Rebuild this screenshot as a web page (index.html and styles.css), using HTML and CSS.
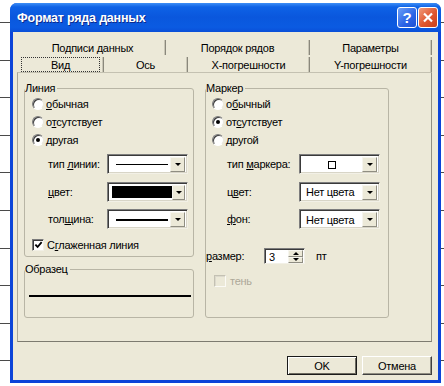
FILE: index.html
```html
<!DOCTYPE html>
<html lang="ru">
    <head>
    <meta charset="utf-8">
    <title>Формат ряда данных</title>
    <link rel="stylesheet" href="styles.css">
    </head>
    <body>
        <div class="window">
            <div class="titlebar">
                <span class="title">Формат ряда данных</span>
                <div class="title-buttons">
                    <span class="tbtn help">?</span>
                    <span class="tbtn close">
                        <svg width="20" height="21" viewBox="0 0 20 21"><path d="M6 6.5 L14 14.5 M14 6.5 L6 14.5" stroke="#fff" stroke-width="2.2" fill="none"/></svg>
                    </span>
                </div>
            </div>

            <div class="client">
                <!-- two rows of tabs, the front one holds the selected tab -->
                <div class="tabs">
                    <div class="tab-row back">
                        <div class="tab">Подписи данных</div>
                        <div class="tab">Порядок рядов</div>
                        <div class="tab">Параметры</div>
                    </div>
                    <div class="tab-row front">
                        <div class="tab active"><span class="focus">Вид</span></div>
                        <div class="tab">Ось</div>
                        <div class="tab">X-погрешности</div>
                        <div class="tab">Y-погрешности</div>
                    </div>
                </div>

                <div class="panel">
                    <div class="panel-body">
                        <div class="column">
                            <fieldset class="group line-group">
                                <legend>Линия</legend>
                                <div class="opt"><span class="radio"></span><span><u>о</u>бычная</span></div>
                                <div class="opt"><span class="radio"></span><span>о<u>т</u>сутствует</span></div>
                                <div class="opt"><span class="radio checked"></span><span>другая</span></div>

                                <div class="field first">
                                    <span class="field-label">тип <u>л</u>инии:</span>
                                    <div class="combo">
                                        <span class="combo-value"><span class="stroke thin"></span></span>
                                        <span class="combo-arrow"></span>
                                    </div>
                                </div>
                                <div class="field">
                                    <span class="field-label"><u>ц</u>вет:</span>
                                    <div class="combo">
                                        <span class="combo-value"><span class="swatch"></span></span>
                                        <span class="combo-arrow"></span>
                                    </div>
                                </div>
                                <div class="field">
                                    <span class="field-label">тол<u>щ</u>ина:</span>
                                    <div class="combo">
                                        <span class="combo-value"><span class="stroke thick"></span></span>
                                        <span class="combo-arrow"></span>
                                    </div>
                                </div>

                                <div class="check-row smooth">
                                    <span class="checkbox">
                                        <svg width="10" height="10" viewBox="0 0 10 10"><path d="M1.5 4.5 L4 7.2 L8.5 1.8" stroke="#000" stroke-width="2" fill="none"/></svg>
                                    </span>
                                    <span>С<u>г</u>лаженная линия</span>
                                </div>
                            </fieldset>

                            <fieldset class="group sample">
                                <legend>Образец</legend>
                                <div class="sample-line"></div>
                            </fieldset>
                        </div>

                        <fieldset class="group marker-group">
                            <legend>Маркер</legend>
                            <div class="opt"><span class="radio"></span><span>о<u>б</u>ычный</span></div>
                            <div class="opt"><span class="radio checked"></span><span>от<u>с</u>утствует</span></div>
                            <div class="opt"><span class="radio"></span><span>другой</span></div>

                            <div class="field first">
                                <span class="field-label">тип <u>м</u>аркера:</span>
                                <div class="combo">
                                    <span class="combo-value center"><span class="marker-box"></span></span>
                                    <span class="combo-arrow"></span>
                                </div>
                            </div>
                            <div class="field">
                                <span class="field-label">ц<u>в</u>ет:</span>
                                <div class="combo">
                                    <span class="combo-value">Нет цвета</span>
                                    <span class="combo-arrow"></span>
                                </div>
                            </div>
                            <div class="field">
                                <span class="field-label"><u>ф</u>он:</span>
                                <div class="combo">
                                    <span class="combo-value">Нет цвета</span>
                                    <span class="combo-arrow"></span>
                                </div>
                            </div>

                            <div class="size-row">
                                <span class="size-label"><u>р</u>азмер:</span>
                                <div class="spin">
                                    <span class="spin-value">3</span>
                                    <span class="spin-btns"><span class="up"></span><span class="down"></span></span>
                                </div>
                                <span class="unit">пт</span>
                            </div>

                            <div class="check-row shadow">
                                <span class="checkbox disabled"></span>
                                <span>тень</span>
                            </div>
                        </fieldset>
                    </div>
                </div>

                <div class="buttons">
                    <button type="button" class="btn default">OK</button>
                    <button type="button" class="btn">Отмена</button>
                </div>
            </div>
        </div>
    </body>
</html>
```

FILE: styles.css
```css
* {
    box-sizing: border-box;
}

html, body {
    margin: 0;
}

body {
    width: 444px;
    height: 386px;
    overflow: hidden;
    font-family: "Liberation Sans", Arial, sans-serif;
    font-size: 11px;
    letter-spacing: -0.25px;
    color: #000;
    /* spreadsheet grid behind the dialog */
    background: #fff repeating-linear-gradient(#fff 0 22px, #4a4a4a 22px 23px, #fff 23px 37.6px);
}

u {
    text-decoration: underline;
    text-underline-offset: 1px;
}

.window {
    margin: 3px 0 0 10px;
    width: 431px;
    height: 380px;
    display: flex;
    flex-direction: column;
    background: #0c44d8;
    border-radius: 7px 7px 0 0;
}

.titlebar {
    height: 29px;
    flex: none;
    display: flex;
    align-items: center;
    justify-content: space-between;
    padding: 0 3px 0 7px;
    border-radius: 7px 7px 0 0;
    background: linear-gradient(#3d8ef6 0, #0e62e6 4px, #0a57dd 14px, #0b5be2 24px, #0a4fd8 29px);
}

.title {
    color: #fff;
    font-weight: bold;
    font-size: 12.5px;
    letter-spacing: -0.2px;
    text-shadow: 1px 1px #0b2a8c;
}

.title-buttons {
    display: flex;
    gap: 1px;
}

.tbtn {
    width: 20px;
    height: 21px;
    border: 1px solid #fff;
    border-radius: 3px;
    display: flex;
    align-items: center;
    justify-content: center;
}

.help {
    background: linear-gradient(135deg, #6b9ff7, #2a63e6 60%, #1f52d4);
    color: #fff;
    font-weight: bold;
    font-size: 15px;
}

.close {
    background: linear-gradient(135deg, #f09a7a, #e0562f 55%, #c9401c);
}

.close svg {
    margin: -1px;
}

.client {
    flex: 1;
    margin: 0 3px 3px;
    padding: 6px 6px 0 4px;
    background: #ece9d8;
}

.tabs {
    padding-left: 3px;
}

.tab-row {
    display: grid;
    height: 17px;
    padding-top: 2px;
}

.back {
    grid-template-columns: 146px 144px 122px;
}

.front {
    grid-template-columns: 84px 84px 122px 122px;
}

.tab {
    display: flex;
    align-items: center;
    justify-content: center;
    border-right: 1px solid #8a887c;
    box-shadow: inset -1px 0 0 #c9c6b6;
    padding-top: 1px;
}

.tab.active {
    padding: 0 3px 0 1px;
}

.focus {
    flex: 1;
    align-self: stretch;
    display: flex;
    align-items: center;
    justify-content: center;
    border: 1px dotted #333;
}

.panel {
    height: 270px;
    padding: 9px 0 0 6px;
    border: 1px solid;
    border-color: #c4c1b1 #8f8d82 #7d7b70 #a8a699;
}

.panel-body {
    display: flex;
    gap: 11px;
}

.column {
    display: flex;
    flex-direction: column;
    width: 170px;
}

.group {
    margin: 0;
    padding: 0;
    min-width: 0;
    border: 1px solid #b8b5a5;
    border-radius: 3px;
}

.group legend {
    padding: 0 2px 0 0;
    line-height: 13px;
}

.line-group {
    padding-bottom: 3px;
}

.sample {
    margin-top: 6px;
    height: 55px;
}

.sample-line {
    margin: 19px 2px 0 4px;
    height: 2px;
    background: #000;
}

.marker-group {
    width: 184px;
}

.opt {
    height: 18px;
    display: flex;
    align-items: center;
    gap: 2px;
    padding-left: 7px;
}

.marker-group .opt {
    padding-left: 6px;
}

.radio {
    width: 12px;
    height: 12px;
    border-radius: 50%;
    background: #fff;
    border: 1px solid;
    border-color: #7a7a7a #e8e6dc #ffffff #7a7a7a;
    box-shadow: inset 1px 1px 0 #3c3c3c;
    display: flex;
    align-items: center;
    justify-content: center;
}

.radio.checked::after {
    content: "";
    width: 4px;
    height: 4px;
    border-radius: 50%;
    background: #000;
}

.field {
    display: flex;
    align-items: center;
    height: 20px;
    margin-top: 7.5px;
    padding-left: 23px;
}

.field.first {
    margin-top: 5px;
}

.field-label {
    width: 59px;
}

.marker-group .field {
    padding-left: 21px;
}

.marker-group .field-label {
    width: 72px;
}

.combo {
    width: 81px;
    height: 20px;
    display: flex;
    background: #fff;
    border: 1px solid;
    border-color: #7d7d7d #f2f0e6 #f2f0e6 #7d7d7d;
    box-shadow: inset 1px 1px 0 #3a3a3a, inset -1px -1px 0 #d8d5c7;
    padding: 2px 2px 1px 2px;
}

.combo-value {
    flex: 1;
    display: flex;
    align-items: center;
    padding-left: 4px;
}

.combo-value.center {
    justify-content: center;
    padding-left: 0;
}

.stroke {
    width: 52px;
    margin-left: 2px;
    background: #000;
}

.stroke.thin {
    height: 1px;
}

.stroke.thick {
    height: 2px;
}

.swatch {
    width: 60px;
    height: 12px;
    margin-left: -2px;
    background: #000;
}

.marker-box {
    width: 8px;
    height: 8px;
    border: 1px solid #000;
}

.combo-arrow {
    width: 15px;
    display: flex;
    align-items: center;
    justify-content: center;
    background: #ece9d8;
    border: 1px solid;
    border-color: #f6f5ee #8f8d82 #8f8d82 #f6f5ee;
}

.combo-arrow::after,
.spin-btns span::after {
    content: "";
    border-left: 3px solid transparent;
    border-right: 3px solid transparent;
    border-top: 3px solid #000;
}

.check-row {
    display: flex;
    align-items: center;
}

.smooth {
    height: 16px;
    margin-top: 7.5px;
    padding-left: 7px;
    gap: 3px;
}

.checkbox {
    width: 12px;
    height: 12px;
    background: #fff;
    border: 1px solid;
    border-color: #7a7a7a #f2f0e6 #f2f0e6 #7a7a7a;
    box-shadow: inset 1px 1px 0 #3c3c3c;
    display: flex;
    align-items: center;
    justify-content: center;
}

.checkbox svg {
    margin: 1px 0 0 1px;
}

.checkbox.disabled {
    background: #ece9d8;
    border-color: #c4c1b3 #fbfaf5 #fbfaf5 #c4c1b3;
    box-shadow: inset 1px 1px 0 #dcd9cc;
}

.size-row {
    display: flex;
    align-items: center;
    height: 16px;
    margin-top: 19px;
}

.size-label {
    width: 58px;
}

.spin {
    width: 41px;
    height: 16px;
    display: flex;
    background: #fff;
    border: 1px solid;
    border-color: #7d7d7d #f2f0e6 #f2f0e6 #7d7d7d;
    box-shadow: inset 1px 1px 0 #3a3a3a;
    padding: 1px 1px 0 1px;
}

.spin-value {
    flex: 1;
    padding: 1px 0 0 3px;
}

.spin-btns {
    width: 15px;
    display: flex;
    flex-direction: column;
}

.spin-btns span {
    flex: 1;
    display: flex;
    align-items: center;
    justify-content: center;
    background: #ece9d8;
    border: 1px solid;
    border-color: #f6f5ee #8f8d82 #8f8d82 #f6f5ee;
}

.spin-btns .up::after {
    border-top: none;
    border-bottom: 3px solid #000;
}

.unit {
    margin-left: 11px;
}

.shadow {
    height: 14px;
    margin-top: 10px;
    padding-left: 8px;
    gap: 4px;
    color: #aca899;
}

.buttons {
    display: flex;
    justify-content: flex-end;
    gap: 5px;
    margin-top: 14px;
}

.btn {
    width: 70px;
    height: 19px;
    padding: 0;
    font-family: inherit;
    font-size: 11px;
    letter-spacing: inherit;
    color: #000;
    background: #ece9d8;
    border: 1px solid;
    border-color: #fff #404040 #404040 #fff;
    box-shadow: inset -1px -1px 0 #8f8d82;
}

.btn.default {
    border: 1px solid #1a1a1a;
    box-shadow: inset 1px 1px 0 #fff, inset -1px -1px 0 #6b695f;
}
```
